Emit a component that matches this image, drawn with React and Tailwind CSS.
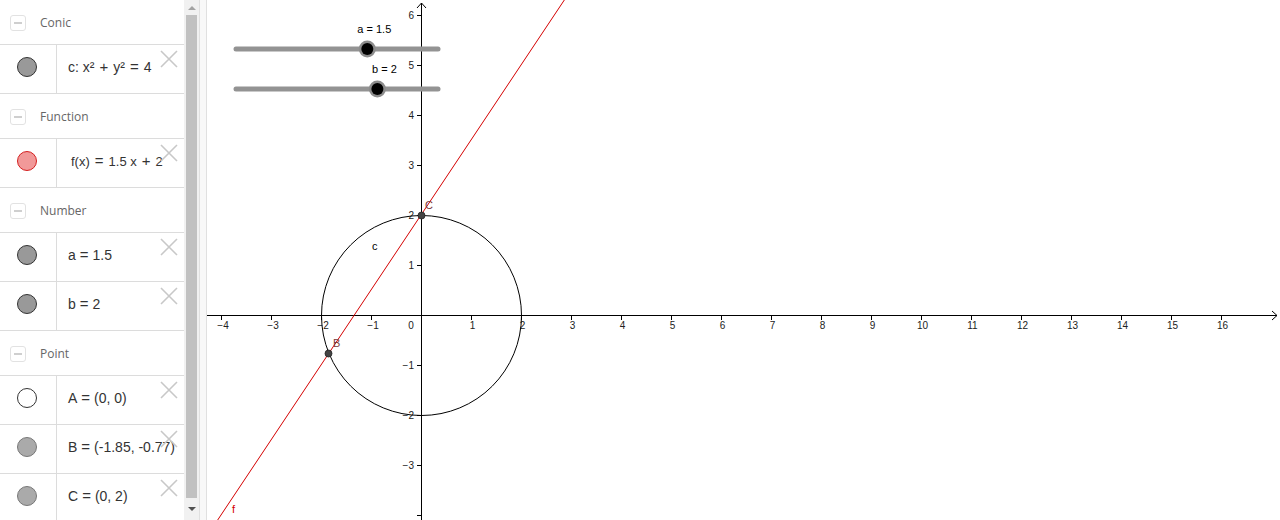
import React from "react";

const X0 = 421;
const Y0 = 315;
const U = 50;

function XIcon() {
  return (
    <svg width="18" height="18" viewBox="0 0 18 18" className="absolute right-[6px] top-[5px]">
      <path d="M1 1 L17 17 M17 1 L1 17" stroke="#c8c8c8" strokeWidth="1.6" />
    </svg>
  );
}

function Header({ label }) {
  return (
    <div className="h-[45px] shrink-0 border-b border-[#dcdcdc] flex items-center pt-[2px]">
      <div className="ml-[10px] w-[16px] h-[16px] rounded-[3px] border border-[#e2e2e2] flex items-center justify-center">
        <div className="w-[8px] h-[2px] bg-[#cfcfcf]" />
      </div>
      <span className="ml-[14px] text-[12px] text-[#666] [font-family:'Open_Sans',sans-serif]">{label}</span>
    </div>
  );
}

function Op({ children, wide }) {
  return <span className={wide ? "mx-[5px] text-[15px]" : "mx-[4px] text-[15px]"}>{children}</span>;
}

function Row({ fill, stroke, children, textClass = "text-[14px]" }) {
  return (
    <div className="h-[49px] shrink-0 border-b border-[#dcdcdc] flex relative">
      <div className="w-[57px] border-r border-[#dcdcdc] flex justify-center pt-[12px]">
        <div className={`w-[20px] h-[20px] rounded-full border ${fill} ${stroke} ml-[-2px]`} />
      </div>
      <div className={`pl-[11px] pt-[12px] leading-[20px] text-[#333] whitespace-nowrap [font-family:'Liberation_Sans',sans-serif] ${textClass}`}>
        {children}
      </div>
      <XIcon />
    </div>
  );
}

function Slider({ y, value, label }) {
  const tx = 236 + (202 * (value + 5)) / 10;
  return (
    <g>
      <text x={tx + 7} y={y - 16} fontSize="11" textAnchor="middle" fill="#000" fontFamily="Liberation Sans, sans-serif">
        {label}
      </text>
      <line x1="236" y1={y} x2="438" y2={y} stroke="#939393" strokeWidth="5" strokeLinecap="round" />
      <circle cx={tx} cy={y} r="8.5" fill="#8c8c8c" />
      <circle cx={tx} cy={y} r="6" fill="#000" />
    </g>
  );
}

function Graph() {
  const xs = [];
  for (let i = -4; i <= 16; i++) if (i !== 0) xs.push(i);
  const ys = [6, 5, 4, 3, 2, 1, -1, -2, -3, -4];
  const lineY = (X) => 215 - 1.5 * (X - X0);
  const bx = X0 + -1.85 * U;
  const by = Y0 + 0.77 * U;
  return (
    <svg width="1073" height="520" viewBox="207 0 1073 520" className="block">
      <line x1="207" y1={Y0 + 0.5} x2="1277" y2={Y0 + 0.5} stroke="#000" strokeWidth="1" />
      <path d={`M1272 ${Y0 - 4} L1277 ${Y0 + 0.5} L1272 ${Y0 + 5}`} fill="none" stroke="#000" strokeWidth="1" />
      <line x1={X0 + 0.5} y1="3" x2={X0 + 0.5} y2="520" stroke="#000" strokeWidth="1" />
      <path d={`M${X0 - 4} 8 L${X0 + 0.5} 3 L${X0 + 5} 8`} fill="none" stroke="#000" strokeWidth="1" />
      {xs.map((i) => (
        <g key={"x" + i}>
          <line x1={X0 + i * U + 0.5} y1={Y0} x2={X0 + i * U + 0.5} y2={Y0 + 5} stroke="#000" />
          <text x={X0 + i * U + (i < 0 ? 2 : 1.5)} y={Y0 + 14} fontSize="10" textAnchor="middle" fill="#222" fontFamily="Liberation Sans, sans-serif">
            {i < 0 ? "\u2212" + -i : i}
          </text>
        </g>
      ))}
      <text x={X0 - 10} y={Y0 + 14} fontSize="10" textAnchor="middle" fill="#222" fontFamily="Liberation Sans, sans-serif">0</text>
      {ys.map((j) => (
        <g key={"y" + j}>
          <line x1={X0 - 4} y1={Y0 - j * U + 0.5} x2={X0 + 1} y2={Y0 - j * U + 0.5} stroke="#000" />
          {j !== -4 && (
            <text x={X0 - 7} y={Y0 - j * U + 4} fontSize="10" textAnchor="end" fill="#222" fontFamily="Liberation Sans, sans-serif">
              {j < 0 ? "\u2212" + -j : j}
            </text>
          )}
        </g>
      ))}
      <circle cx={X0 + 0.5} cy={Y0 + 0.5} r={2 * U} fill="none" stroke="#000" strokeWidth="1" />
      <text x="372" y="250" fontSize="11" fill="#000" fontFamily="Liberation Sans, sans-serif">c</text>
      <line x1="200" y1={lineY(200)} x2="580" y2={lineY(580)} stroke="#d40000" strokeWidth="1" />
      <text x="232" y="513" fontSize="11" fill="#d40000" fontFamily="Liberation Sans, sans-serif">f</text>
      <circle cx={X0 + 0.5} cy={215.5} r="3.5" fill="#444" stroke="#222" strokeWidth="0.8" />
      <text x="425" y="209" fontSize="11" fill="#7a3b3b" fontFamily="Liberation Sans, sans-serif">C</text>
      <circle cx={bx} cy={by} r="3.5" fill="#444" stroke="#222" strokeWidth="0.8" />
      <text x="333" y="347" fontSize="11" fill="#7a3b3b" fontFamily="Liberation Sans, sans-serif">B</text>
      <Slider y={49} value={1.5} label="a = 1.5" />
      <Slider y={89} value={2} label="b = 2" />
    </svg>
  );
}

export default function App() {
  return (
    <div className="w-[1280px] h-[520px] overflow-hidden bg-white flex">
      <div className="w-[184px] shrink-0 flex flex-col overflow-hidden">
        <Header label="Conic" />
        <Row fill="bg-[#999]" stroke="border-[#333]">
          c: x²<Op wide>+</Op>y²<Op wide>=</Op>4
        </Row>
        <Header label="Function" />
        <Row fill="bg-[#f19999]" stroke="border-[#d42020]" textClass="text-[13px] pl-[14px]">
          f(x)<Op wide>=</Op>1.5 x<Op wide>+</Op>2
        </Row>
        <Header label="Number" />
        <Row fill="bg-[#999]" stroke="border-[#333]">
          a<Op>=</Op>1.5
        </Row>
        <Row fill="bg-[#999]" stroke="border-[#333]">
          b<Op>=</Op>2
        </Row>
        <Header label="Point" />
        <Row fill="bg-white" stroke="border-[#333]">
          A<Op>=</Op>(0, 0)
        </Row>
        <Row fill="bg-[#aaa]" stroke="border-[#777]">
          B<Op>=</Op>(-1.85, -0.77)
        </Row>
        <Row fill="bg-[#aaa]" stroke="border-[#777]">
          C<Op>=</Op>(0, 2)
        </Row>
      </div>
      <div className="w-[15px] shrink-0 bg-[#f1f1f1] flex flex-col items-center">
        <div className="h-[15px] flex items-center justify-center">
          <div className="w-0 h-0 border-l-[4px] border-r-[4px] border-b-[4px] border-l-transparent border-r-transparent border-b-[#a3a3a3]" />
        </div>
        <div className="w-[11px] flex-1 bg-[#c1c1c1]" />
        <div className="h-[22px] flex items-center justify-center">
          <div className="w-0 h-0 border-l-[4px] border-r-[4px] border-t-[4px] border-l-transparent border-r-transparent border-t-[#505050]" />
        </div>
      </div>
      <div className="w-[8px] shrink-0 border-l border-r border-[#e0e0e0] bg-[#f8f8f8]" />
      <div className="flex-1">
        <Graph />
      </div>
    </div>
  );
}
